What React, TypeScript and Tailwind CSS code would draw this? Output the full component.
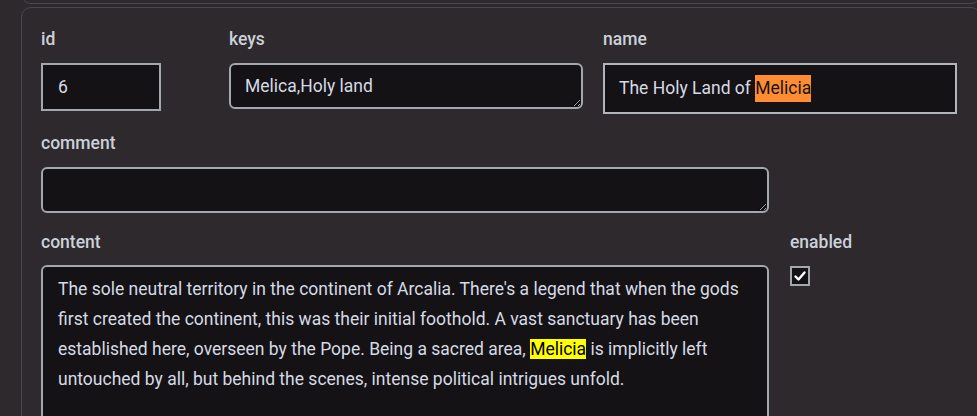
import React from "react";

const labelCls =
  "block h-6 leading-6 text-[17.5px] font-medium text-[#ccd1d9] whitespace-nowrap";

export default function App() {
  return (
    <div className="h-[416px] w-[977px] overflow-hidden bg-[#2d292d] font-[Roboto,sans-serif]">
      <div className="pl-[21px]">
        <div className="-mt-[20px] h-[24px] w-[960px] rounded-b-[10px] border border-[#4b474e]" />
        <div className="mt-[3px] w-[960px] rounded-[10px] border border-[#4b474e] pl-[19px] pt-[19px] pb-6">
          {/* Row 1 */}
          <div className="flex items-start mb-[17px]">
            <div className="w-[188px] shrink-0">
              <span className={labelCls}>id</span>
              <div className="mt-3 flex h-[48px] w-[120px] items-center border-2 border-[#a3a7ae] bg-[#151216] px-[15px] text-[17.5px] text-[#d5dbe4]">
                6
              </div>
            </div>
            <div className="w-[354px] shrink-0 mr-[20px]">
              <span className={labelCls}>keys</span>
              <textarea
                readOnly
                defaultValue="Melica,Holy land"
                className="mt-3 block h-[46px] w-[354px] resize-y rounded-md border-2 border-[#a3a7ae] bg-[#151216] px-[14px] py-[9px] text-[17.5px] leading-6 text-[#d5dbe4] outline-none"
              />
            </div>
            <div className="w-[354px] shrink-0">
              <span className={labelCls}>name</span>
              <div className="mt-3 flex h-[51px] w-[354px] items-center border-2 border-[#b0b4bb] bg-[#151216] px-[14px] text-[17.5px] text-[#d5dbe4] whitespace-nowrap">
                The Holy Land of&nbsp;
                <span className="bg-[#ff8c33] text-[#141414]">Melicia</span>
              </div>
            </div>
          </div>

          {/* Row 2 */}
          <div className="mb-[17px]">
            <span className={labelCls}>comment</span>
            <textarea
              readOnly
              defaultValue=""
              className="mt-3 block h-[46px] w-[728px] resize-y rounded-md border-2 border-[#a3a7ae] bg-[#151216] px-[14px] py-[9px] text-[17.5px] leading-6 text-[#d5dbe4] outline-none"
            />
          </div>

          {/* Row 3 */}
          <div className="flex items-start">
            <div className="w-[728px] shrink-0 mr-[21px]">
              <span className={labelCls}>content</span>
              <div className="mt-[11px] h-[200px] w-[728px] rounded-md border-2 border-[#a3a7ae] bg-[#151216] px-[15px] pt-[7px] text-[17.5px] leading-[30px] text-[#d5dbe4]">
                <div className="whitespace-nowrap">
                  The sole neutral territory in the continent of Arcalia. There's a legend that when the gods
                </div>
                <div className="whitespace-nowrap">
                  first created the continent, this was their initial foothold. A vast sanctuary has been
                </div>
                <div className="whitespace-nowrap">
                  established here, overseen by the Pope. Being a sacred area,{" "}
                  <span className="bg-[#ffff00] text-black">Melicia</span> is implicitly left
                </div>
                <div className="whitespace-nowrap">
                  untouched by all, but behind the scenes, intense political intrigues unfold.
                </div>
              </div>
            </div>
            <div>
              <span className={labelCls}>enabled</span>
              <div className="mt-3 flex h-[20px] w-[20px] items-center justify-center border-2 border-[#a3a7ae] bg-[#151216]">
                <svg width="14" height="14" viewBox="0 0 14 14">
                  <polyline
                    points="2.5,7.5 5.5,10.5 11.5,3.5"
                    fill="none"
                    stroke="#ffffff"
                    strokeWidth="2.4"
                    strokeLinecap="round"
                    strokeLinejoin="round"
                  />
                </svg>
              </div>
            </div>
          </div>
        </div>
      </div>
    </div>
  );
}
